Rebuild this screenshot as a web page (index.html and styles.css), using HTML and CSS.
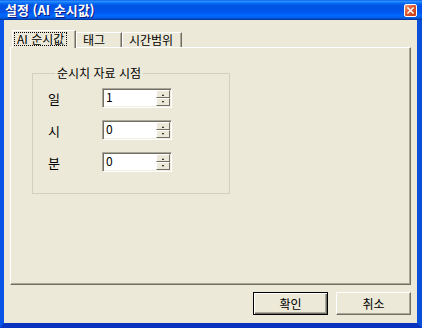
FILE: index.html
```html
<!DOCTYPE html>
<html lang="ko">
<head>
    <meta charset="UTF-8">
    <title>설정 (AI 순시값)</title>
    <link rel="stylesheet" href="styles.css">
</head>
<body>
<div class="window">
    <div class="titlebar">
        <span class="title">설정 (AI 순시값)</span>
        <span class="close">
            <svg width="13" height="13" viewBox="0 0 13 13" xmlns="http://www.w3.org/2000/svg">
                <path d="M3.5 3.5L9.5 9.5M9.5 3.5L3.5 9.5" stroke="#ffffff" stroke-width="1.8" stroke-linecap="square"></path>
            </svg>
        </span>
    </div>
    <div class="client">
        <div class="tabs">
            <div class="tab tab-ai active"><span class="focus">AI 순시값</span></div>
            <div class="tab tab-tag">태그</div>
            <div class="tab tab-range">시간범위</div>
        </div>
        <div class="panel">
            <fieldset class="group">
                <legend>순시치 자료 시점</legend>
                <div class="row">
                    <span class="label">일</span>
                    <div class="spin">
                        <span class="value">1</span>
                        <div class="arrows"><span class="up"></span><span class="down"></span></div>
                    </div>
                </div>
                <div class="row">
                    <span class="label">시</span>
                    <div class="spin">
                        <span class="value">0</span>
                        <div class="arrows"><span class="up"></span><span class="down"></span></div>
                    </div>
                </div>
                <div class="row">
                    <span class="label">분</span>
                    <div class="spin">
                        <span class="value">0</span>
                        <div class="arrows"><span class="up"></span><span class="down"></span></div>
                    </div>
                </div>
            </fieldset>
        </div>
        <div class="buttons">
            <button class="btn default">확인</button>
            <button class="btn">취소</button>
        </div>
    </div>
</div>
</body>
</html>
```

FILE: styles.css
```css
body {
    margin: 0;
    font-family: "Noto Sans CJK KR", "Noto Sans", sans-serif;
    font-size: 12px;
    color: #000000;
}

.window {
    display: flex;
    flex-direction: column;
    width: 422px;
    height: 328px;
    box-sizing: border-box;
}

.titlebar {
    display: flex;
    align-items: center;
    justify-content: space-between;
    height: 20px;
    padding: 0 5px 0 5px;
    background: linear-gradient(#0058ee 0%, #3593ff 6%, #127dff 12%, #0262ee 20%, #0054e3 30%, #0055eb 56%, #005bf5 66%, #026afe 76%, #0062ef 86%, #0052d6 92%, #0040ab 96%, #003092 100%);
}

.titlebar .title {
    font-weight: bold;
    font-size: 13px;
    line-height: 20px;
    color: #ffffff;
    text-shadow: 1px 1px #0a1883;
}

.titlebar .close {
    display: flex;
    width: 13px;
    height: 13px;
    box-sizing: border-box;
    border: 1px solid #ffffff;
    border-radius: 2px;
    background: linear-gradient(135deg, #f0a080 0%, #e05a30 40%, #c83c10 100%);
}

.titlebar .close svg {
    width: 11px;
    height: 11px;
}

.client {
    display: flex;
    flex: 1;
    flex-direction: column;
    padding: 10px 6px 8px 6px;
    border-right: 5px solid #0a4fd8;
    border-bottom: 5px solid #0834c0;
    border-left: 4px solid #0a55e8;
    background-color: #ece9d8;
}

.tabs {
    display: flex;
    align-items: flex-end;
    height: 17px;
    padding-left: 2px;
}

.tab {
    height: 15px;
    box-sizing: border-box;
    padding-left: 6px;
    line-height: 13px;
    border-top: 1px solid #ffffff;
    border-left: 1px solid #ffffff;
    border-right: 1px solid #716f64;
    box-shadow: inset -1px 0 #aca899;
    white-space: nowrap;
}

.tab-ai {
    width: 64px;
    padding-left: 2px;
}

.tab-tag {
    width: 46px;
}

.tab-range {
    width: 60px;
}

.tab.active {
    position: relative;
    z-index: 1;
    height: 18px;
    margin-bottom: -1px;
    padding-top: 1px;
    background-color: #ece9d8;
}

.tab .focus {
    display: inline-block;
    padding: 0 2px;
    line-height: 12px;
    outline: 1px dotted #000000;
}

.panel {
    flex: 1;
    border-top: 1px solid #ffffff;
    border-left: 1px solid #ffffff;
    border-right: 1px solid #716f64;
    border-bottom: 1px solid #716f64;
    box-shadow: inset -1px -1px #aca899;
}

.group {
    width: 198px;
    height: 128px;
    box-sizing: border-box;
    margin: 18px 0 0 21px;
    padding: 8px 0 0 15px;
    border: 1px solid #d0d0bf;
}

.group legend {
    margin-left: 7px;
    padding: 0 2px;
    line-height: 14px;
}

.row {
    display: flex;
    align-items: center;
    height: 20px;
    margin-bottom: 12px;
}

.row .label {
    width: 54px;
    font-size: 13px;
}

.spin {
    display: flex;
    width: 70px;
    height: 20px;
    box-sizing: border-box;
    border-top: 1px solid #aca899;
    border-left: 1px solid #aca899;
    border-right: 1px solid #ffffff;
    border-bottom: 1px solid #ffffff;
    box-shadow: inset 1px 1px #716f64, inset -1px -1px #f1efe2;
    background-color: #ffffff;
}

.spin .value {
    flex: 1;
    padding: 1px 0 0 3px;
    line-height: 14px;
}

.spin .arrows {
    display: flex;
    flex-direction: column;
    width: 14px;
    padding: 1px 1px 1px 0;
}

.spin .arrows span {
    position: relative;
    flex: 1;
    box-sizing: border-box;
    border-top: 1px solid #ffffff;
    border-left: 1px solid #ffffff;
    border-right: 1px solid #716f64;
    border-bottom: 1px solid #716f64;
    background-color: #ece9d8;
}

.spin .arrows .up::after,
.spin .arrows .down::after {
    content: "";
    position: absolute;
    top: 3px;
    left: 5px;
    border-right: 1.5px solid transparent;
    border-left: 1.5px solid transparent;
}

.spin .arrows .up::after {
    border-bottom: 2px solid #000000;
}

.spin .arrows .down::after {
    top: 2px;
    border-top: 2px solid #000000;
}

.buttons {
    display: flex;
    justify-content: flex-end;
    gap: 8px;
    margin-top: 7px;
}

.btn {
    width: 75px;
    height: 23px;
    padding: 0;
    font-family: inherit;
    font-size: 12px;
    color: #000000;
    border-top: 1px solid #ffffff;
    border-left: 1px solid #ffffff;
    border-right: 1px solid #716f64;
    border-bottom: 1px solid #716f64;
    box-shadow: inset -1px -1px #aca899;
    background-color: #ece9d8;
}

.btn.default {
    border: 1px solid #000000;
    box-shadow: inset 1px 1px #ffffff, inset -1px -1px #716f64, inset -2px -2px #aca899;
}
```
